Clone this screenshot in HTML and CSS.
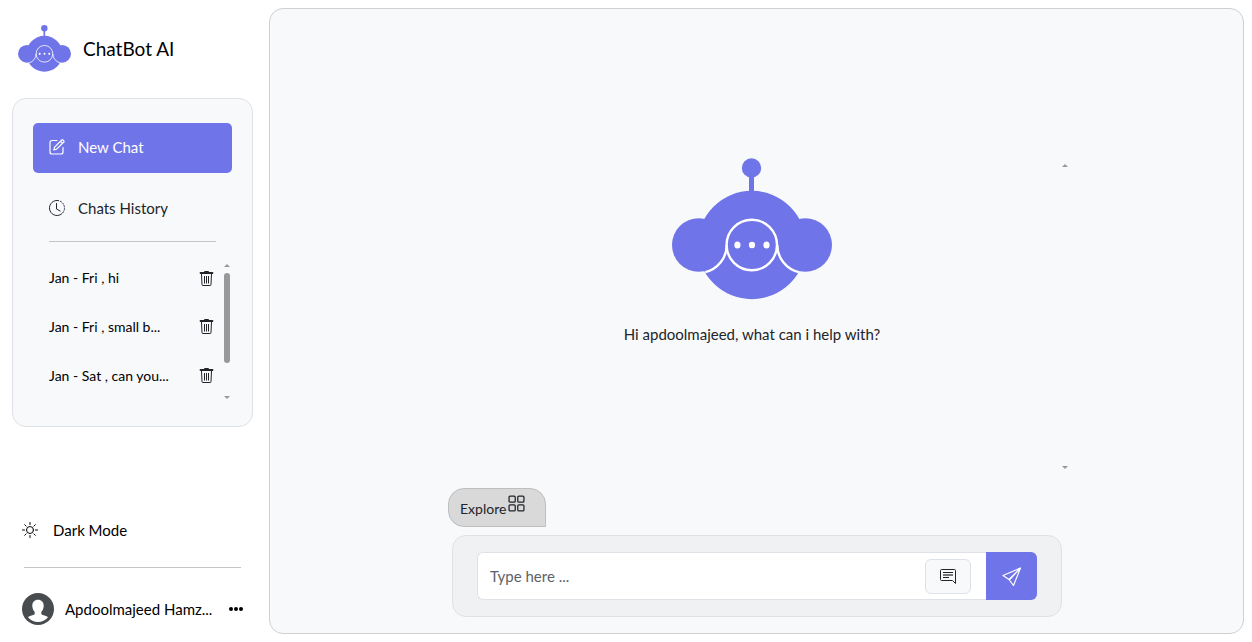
FILE: index.html
```html
<!DOCTYPE html>
<html lang="en">
<head>
<meta charset="utf-8">
<meta name="viewport" content="width=device-width, initial-scale=1">
<title>ChatBot AI</title>
<link rel="stylesheet" href="styles.css">
</head>
<body>
<svg class="defs" aria-hidden="true">
  <symbol id="bot" viewBox="0 0 160 142">
    <g fill="#6f74e8">
      <circle cx="79.5" cy="10" r="9.7"/>
      <rect x="77" y="16" width="5" height="20"/>
      <circle cx="79.8" cy="87" r="54.2"/>
      <circle cx="26.7" cy="87" r="26.7"/>
      <circle cx="133.3" cy="87" r="26.7"/>
    </g>
    <g fill="none" stroke="#fff" stroke-width="2.4">
      <circle cx="79.8" cy="87" r="25.2"/>
      <path d="M54.7 87a28 28 0 0 1-21.500 27.200M105.3 87a28 28 0 0 0 21.500 27.200"/>
    </g>
    <g fill="#fff">
      <ellipse cx="65.4" cy="87" rx="3.1" ry="3.5"/>
      <ellipse cx="80" cy="87" rx="3.1" ry="3.2"/>
      <ellipse cx="94.5" cy="87" rx="3.1" ry="3.5"/>
    </g>
  </symbol>
  <symbol id="trash" viewBox="0 0 15 15">
    <g fill="none" stroke="currentColor">
      <path d="M5.500 1.500V.5h4v1"/>
      <path d="M1.500 2h12" stroke-width="1.800" stroke-linecap="round"/>
      <path d="M2.500 3l.5 10.500a1 1 0 0 0 1 1h7a1 1 0 0 0 1-1L12.500 3"/>
      <path d="M5.500 5v7.500M7.500 5v7.500M9.500 5v7.500"/>
    </g>
  </symbol>
</svg>

<aside class="sidebar">
  <header class="brand">
    <svg class="brand-logo" aria-hidden="true"><use href="#bot"/></svg>
    <h1 class="brand-name">ChatBot AI</h1>
  </header>

  <nav class="panel">
    <button class="new-chat" type="button">
      <svg class="icon" viewBox="0 0 16 16" fill="none" stroke="currentColor" stroke-width="1.200" stroke-linecap="round" stroke-linejoin="round" aria-hidden="true"><path d="M8 1.500H3a2 2 0 0 0-2 2V13a2 2 0 0 0 2 2h9a2 2 0 0 0 2-2V8.500M12.800 1a.8.8 0 0 1 1.100 0l.9.900a.8.800 0 0 1 0 1.100L7.600 10.200l-2.800.8.800-2.800zM11.500 2.300l2 2"/></svg>
      New Chat
    </button>
    <div class="history">
      <svg class="icon" viewBox="0 0 16 16" fill="none" stroke="currentColor" aria-hidden="true"><path d="M8 .5a7.500 7.500 0 1 0 5.300 12.800"/><path d="M8 .5a7.500 7.500 0 0 1 5.300 12.800" stroke-dasharray="2 1"/><path d="M7.500 3.500V9l3.600 2" stroke-linecap="round"/></svg>
      <h2 class="history-title">Chats History</h2>
    </div>
    <hr class="rule">
    <div class="chats">
      <ul class="chat-list">
        <li class="chat-row"><a class="chat-link" href="#">Jan - Fri , hi</a><button class="plain" type="button" aria-label="Delete chat"><svg class="trash"><use href="#trash"/></svg></button></li>
        <li class="chat-row"><a class="chat-link" href="#">Jan - Fri , small b...</a><button class="plain" type="button" aria-label="Delete chat"><svg class="trash"><use href="#trash"/></svg></button></li>
        <li class="chat-row"><a class="chat-link" href="#">Jan - Sat , can you...</a><button class="plain" type="button" aria-label="Delete chat"><svg class="trash"><use href="#trash"/></svg></button></li>
      </ul>
      <div class="scrollbar" aria-hidden="true"><span class="arrow-up"></span><span class="thumb"></span><span class="arrow-down"></span></div>
    </div>
  </nav>

  <footer class="account">
    <button class="theme plain" type="button">
      <svg class="icon" viewBox="0 0 16 16" fill="none" stroke="currentColor" stroke-linecap="round" aria-hidden="true"><circle cx="8" cy="8" r="3.500"/><path d="M8 .5v2M8 13.500v2M.5 8h2M13.500 8h2M2.700 2.700l1.400 1.400M11.900 11.900l1.400 1.400M13.300 2.700l-1.400 1.400M4.100 11.900l-1.400 1.400"/></svg>
      Dark Mode
    </button>
    <hr class="rule account-rule">
    <div class="profile">
      <svg class="avatar" viewBox="0 0 32 32" aria-hidden="true"><circle cx="16" cy="16" r="16" fill="#494c4f"/><path d="M16 6.800c-3.500 0-5.700 2.500-5.700 6 0 2.600 1 4.700 2.400 6v1.700c0 .9-.5 1.200-1.500 1.500-2.300.7-4.200 1.300-5.200 2.200a13 13 0 0 0 20 0c-1-.9-2.900-1.500-5.200-2.200-1-.3-1.500-.6-1.500-1.500v-1.700c1.400-1.300 2.400-3.400 2.400-6 0-3.500-2.200-6-5.700-6z" fill="#fff"/></svg>
      <span class="profile-name">Apdoolmajeed Hamz...</span>
      <button class="plain" type="button" aria-label="Account menu"><svg class="dots" viewBox="0 0 14 4" aria-hidden="true"><circle cx="2" cy="2" r="2"/><circle cx="7" cy="2" r="2"/><circle cx="12" cy="2" r="2"/></svg></button>
    </div>
  </footer>
</aside>

<main class="main">
  <div class="stage">
    <section class="messages">
      <div class="welcome">
        <svg class="hero" aria-hidden="true"><use href="#bot"/></svg>
        <p class="greeting">Hi apdoolmajeed, what can i help with?</p>
      </div>
      <div class="scrollbar" aria-hidden="true"><span class="arrow-up"></span><span class="arrow-down"></span></div>
    </section>
    <button class="explore" type="button">
      Explore
      <svg class="grid-icon" viewBox="0 0 16 16" fill="none" stroke="currentColor" stroke-width="1.200" aria-hidden="true"><rect x="1" y="1" width="5.800" height="5.800" rx="1"/><rect x="9.200" y="1" width="5.800" height="5.800" rx="1"/><rect x="1" y="9.200" width="5.800" height="5.800" rx="1"/><rect x="9.200" y="9.200" width="5.800" height="5.800" rx="1"/></svg>
    </button>
    <form class="composer">
      <div class="field">
        <input class="field-input" type="text" placeholder="Type here ..." aria-label="Message">
        <button class="note" type="button" aria-label="Prompts"><svg class="icon" viewBox="0 -1 16 16" fill="none" stroke="currentColor" aria-hidden="true"><path d="M1.500.5h13a1 1 0 0 1 1 1v13l-3-3h-11a1 1 0 0 1-1-1v-9a1 1 0 0 1 1-1zM3 3.500h10M3 8.500h6"/><path d="M3 6h10" stroke="#777" stroke-width="2"/></svg></button>
      </div>
      <button class="send" type="button" aria-label="Send"><svg class="send-icon" viewBox="0 0 20 20" fill="none" stroke="currentColor" stroke-width="1.200" stroke-linejoin="round" aria-hidden="true"><path d="M18.500 2L1 9.500l6 4 4.500 6zM18.500 2L7 13.500v0M18.500 2L7.500 13.800"/></svg></button>
    </form>
  </div>
</main>
</body>
</html>
```
FILE: styles.css
```css
* { box-sizing: border-box; }
body {
  display: flex;
  gap: 16px;
  min-height: 100vh;
  margin: 0;
  padding: 8px 8px 8px 12px;
  background: #fff;
  color: #000;
  font-family: "Gill Sans", "Gill Sans MT", Lato, sans-serif;
  font-size: 15px;
  line-height: 24px;
}
button, input { font: inherit; color: inherit; }
button { cursor: pointer; }
svg { display: block; flex: none; }
.defs { position: absolute; width: 0; height: 0; }
.icon { width: 16px; height: 16px; }
.plain { padding: 0; border: 0; background: none; }
.rule { width: 100%; height: 1px; margin: 0; border: 0; background: #c3c5c8; }

.sidebar { display: flex; flex: none; flex-direction: column; width: 241px; }
.brand { display: flex; align-items: center; gap: 12px; padding: 17px 6px 26px; }
.brand-logo { width: 53px; height: 47px; }
.brand-name { margin: 0; font-size: 19px; font-weight: 400; }

.panel { padding: 24px 20px 26px; border: 1px solid #dee2e6; border-radius: 14px; background: #f8f9fb; color: #212529; }
.new-chat {
  display: flex;
  align-items: center;
  gap: 13px;
  width: 100%;
  height: 50px;
  padding: 0 16px 2px;
  border: 0;
  border-radius: 5px;
  background: #6f74e8;
  color: #fff;
}
.history { display: flex; align-items: center; gap: 13px; height: 68px; padding: 2px 16px 0; }
.history-title { margin: 0; font-size: 15px; font-weight: 400; }
.panel .rule { width: auto; margin: 0 16px 12px; }
.chats { display: flex; justify-content: space-between; padding: 0 2px 0 16px; }
.chat-list { display: grid; grid-auto-rows: 1fr; width: 165px; height: 146px; margin: 0; padding: 0; list-style: none; }
.chat-row { display: flex; align-items: center; justify-content: space-between; }
.chat-link { color: #000; font-size: 14px; text-decoration: none; }
.trash { width: 15px; height: 15px; color: #212529; }

.scrollbar { display: flex; flex: none; flex-direction: column; width: 6px; }
.arrow-up, .arrow-down { border: solid transparent; border-width: 0 3px; }
.arrow-up { border-bottom: 3px solid #999; }
.arrow-down { margin-top: auto; border-top: 3px solid #999; }
.thumb { height: 90px; margin-top: 6px; border-radius: 3px; background: #999; }
.chats .scrollbar { padding: 10px 0 1px; }

.account { margin-top: auto; padding: 16px 10px 9px; }
.theme { display: flex; align-items: center; gap: 15px; }
.account-rule { width: auto; margin: 25px 2px 25px; }
.profile { display: flex; align-items: center; gap: 11px; }
.avatar { width: 32px; height: 32px; }
.profile-name { flex: 1; white-space: nowrap; }
.dots { width: 14px; height: 4px; }

.main { display: flex; flex: 1; justify-content: center; min-width: 0; border: 1px solid #ced0d2; border-radius: 14px; background: #f8f9fb; color: #212529; }
.stage { display: flex; flex-direction: column; justify-content: flex-end; width: 100%; max-width: 629px; padding-bottom: 16px; }
.messages { display: flex; margin-bottom: 13px; }
.welcome { display: flex; flex: 1; flex-direction: column; align-items: center; min-height: 317px; }
.hero { width: 160px; height: 142px; }
.greeting { margin: 22px 0 0; }
.messages .scrollbar { margin-right: 3px; padding: 6px 0; }
.explore {
  display: flex;
  align-self: flex-start;
  gap: 2px;
  width: 98px;
  height: 39px;
  margin: 0 0 8px 6px;
  padding: 6px 11px;
  border: 1px solid #bcbec0;
  border-radius: 16px 16px 0 16px;
  background: #d9d9d9;
  font-size: 14px;
  line-height: 28px;
}
.grid-icon { width: 17px; height: 17px; }
.composer { display: flex; margin: 0 9px 0 10px; padding: 16px 24px; border: 1px solid #dee2e6; border-radius: 14px; background: #f0f1f3; }
.field { display: flex; flex: 1; align-items: center; padding-right: 15px; border: 1px solid #dee2e6; border-right: 0; border-radius: 6px 0 0 6px; background: #fff; }
.field-input { flex: 1; min-width: 0; height: 46px; padding: 0 12px; border: 0; background: none; }
.field-input::placeholder { color: #5c6268; opacity: 1; }
.note { display: grid; place-items: center; width: 46px; height: 35px; padding: 0; border: 1px solid #dee2e6; border-radius: 6px; background: #f8f9fb; }
.send { display: grid; place-items: center; width: 51px; height: 48px; padding: 0; border: 0; border-radius: 0 6px 6px 0; background: #6f74e8; color: #fff; }
.send-icon { width: 20px; height: 20px; }
```
